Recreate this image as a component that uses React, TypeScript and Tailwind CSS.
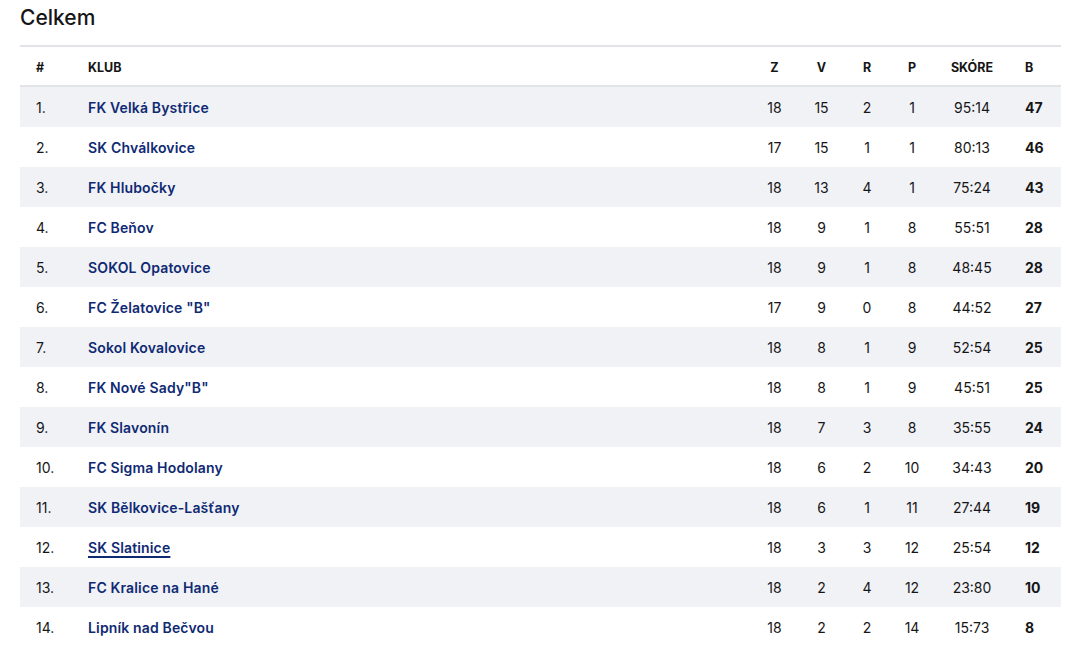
const rows = [
  { pos: '1.', club: 'FK Velká Bystřice', z: 18, v: 15, r: 2, p: 1, score: '95:14', b: 47 },
  { pos: '2.', club: 'SK Chválkovice', z: 17, v: 15, r: 1, p: 1, score: '80:13', b: 46 },
  { pos: '3.', club: 'FK Hlubočky', z: 18, v: 13, r: 4, p: 1, score: '75:24', b: 43 },
  { pos: '4.', club: 'FC Beňov', z: 18, v: 9, r: 1, p: 8, score: '55:51', b: 28 },
  { pos: '5.', club: 'SOKOL Opatovice', z: 18, v: 9, r: 1, p: 8, score: '48:45', b: 28 },
  { pos: '6.', club: 'FC Želatovice "B"', z: 17, v: 9, r: 0, p: 8, score: '44:52', b: 27 },
  { pos: '7.', club: 'Sokol Kovalovice', z: 18, v: 8, r: 1, p: 9, score: '52:54', b: 25 },
  { pos: '8.', club: 'FK Nové Sady"B"', z: 18, v: 8, r: 1, p: 9, score: '45:51', b: 25 },
  { pos: '9.', club: 'FK Slavonín', z: 18, v: 7, r: 3, p: 8, score: '35:55', b: 24 },
  { pos: '10.', club: 'FC Sigma Hodolany', z: 18, v: 6, r: 2, p: 10, score: '34:43', b: 20 },
  { pos: '11.', club: 'SK Bělkovice-Lašťany', z: 18, v: 6, r: 1, p: 11, score: '27:44', b: 19 },
  { pos: '12.', club: 'SK Slatinice', z: 18, v: 3, r: 3, p: 12, score: '25:54', b: 12, highlight: true },
  { pos: '13.', club: 'FC Kralice na Hané', z: 18, v: 2, r: 4, p: 12, score: '23:80', b: 10 },
  { pos: '14.', club: 'Lipník nad Bečvou', z: 18, v: 2, r: 2, p: 14, score: '15:73', b: 8 },
];

const cols = 'grid grid-cols-[68px_1fr_47px_47px_44px_46px_74px_52px] items-center';

export default function App() {
  return (
    <div className="min-h-screen bg-white px-5 pt-[4px] text-[#161616]" style={{ fontFamily: 'Inter, "Noto Sans", sans-serif' }}>
      <h2 className="text-[21px] font-medium leading-[28px]">Celkem</h2>

      <div className="mt-[13px] border-t-2 border-[#e1e3e8]">
        {/* Header */}
        <div className={`${cols} h-[40px] pt-[4px] border-b-2 border-[#e1e3e8] text-[12.5px] font-bold uppercase`}>
          <div className="pl-4">#</div>
          <div>Klub</div>
          <div className="text-center">Z</div>
          <div className="text-center">V</div>
          <div className="text-center">R</div>
          <div className="text-center">P</div>
          <div className="text-center">Skóre</div>
          <div className="pl-4">B</div>
        </div>

        {/* Rows */}
        {rows.map((row, i) => (
          <div key={row.pos} className={`${cols} h-10 text-[14px] ${i % 2 === 0 ? 'bg-[#f1f2f6]' : 'bg-white'}`}>
            <div className="pl-4">{row.pos}</div>
            <div>
              <span className={`font-semibold text-[#0f2a73] tracking-[0.15px] ${row.highlight ? 'underline decoration-2 underline-offset-[3px]' : ''}`}>
                {row.club}
              </span>
            </div>
            <div className="text-center">{row.z}</div>
            <div className="text-center">{row.v}</div>
            <div className="text-center">{row.r}</div>
            <div className="text-center">{row.p}</div>
            <div className="text-center">{row.score}</div>
            <div className="pl-4 font-bold">{row.b}</div>
          </div>
        ))}
      </div>
    </div>
  );
}
